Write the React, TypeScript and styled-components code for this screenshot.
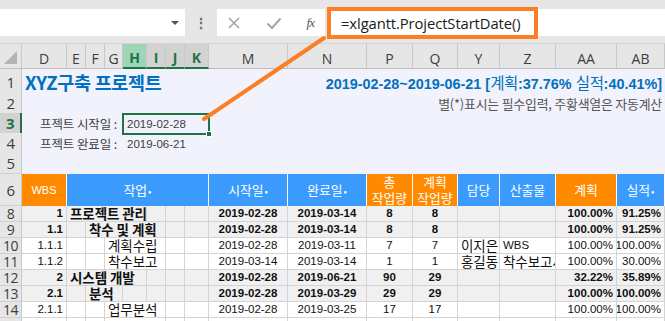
import React from 'react';
import styled, { createGlobalStyle } from 'styled-components';

const COLS =
  '22px 45px 19px 19px 18px 24px 19px 19px 24px 79px 79px 46px 45px 42px 56px 61px 48px';

const UI = '"Open Sans", "Noto Sans", "Noto Sans CJK KR", sans-serif';
const KR = '"Noto Sans CJK KR", "Noto Sans", sans-serif';
const NUM = '"Liberation Sans", "Noto Sans CJK KR", sans-serif';

const GlobalStyle = createGlobalStyle`
  html, body { margin: 0; padding: 0; background: #f2f2fc; overflow: hidden; }
  * { box-sizing: border-box; }
`;

const Frame = styled.div`
  position: relative;
  width: 665px;
  height: 321px;
  overflow: hidden;
  background: #f2f2fc;
  font-family: ${KR};
`;

/* ---------- formula bar ---------- */
const FormulaBar = styled.div`
  height: 44px;
  background: #e6e6e6;
  display: flex;
  align-items: flex-start;
  padding-top: 9px;
  border-bottom: 1px solid #d4d4d4;
`;

const NameBox = styled.div`
  width: 185px;
  height: 27px;
  background: #fff;
  display: flex;
  align-items: center;
  justify-content: flex-end;
  padding-right: 6px;
`;

const Caret = styled.div`
  width: 0;
  height: 0;
  border-left: 4px solid transparent;
  border-right: 4px solid transparent;
  border-top: 4px solid #555;
`;

const Dots = styled.div`
  width: 32px;
  height: 27px;
  display: flex;
  align-items: center;
  justify-content: center;
  color: #666;
  font: bold 14px ${UI};
`;

const FxBox = styled.div`
  width: 108px;
  height: 27px;
  background: #fff;
  display: flex;
  align-items: center;
  justify-content: space-between;
  padding: 0 11px 0 10px;
`;

const FxText = styled.span`
  font: italic 13px "Liberation Serif", serif;
  color: #555;
  letter-spacing: -1px;
`;

const FormulaField = styled.div`
  flex: 1;
  margin-left: 2px;
  height: 27px;
  background: #fff;
  display: flex;
  align-items: center;
  padding-left: 14px;
  font: 14.8px ${UI};
  color: #1a1a1a;
  letter-spacing: -0.1px;
`;

/* ---------- annotation overlay ---------- */
const Callout = styled.div`
  position: absolute;
  left: 327px;
  top: 7px;
  width: 211px;
  height: 32px;
  border: 4px solid #fb7f24;
  pointer-events: none;
`;

const Pointer = styled.svg`
  position: absolute;
  left: 0;
  top: 0;
  pointer-events: none;
`;

/* ---------- grid rows ---------- */
const Row = styled.div<{ $h: number; $bg?: string }>`
  display: grid;
  grid-template-columns: ${COLS};
  height: ${(p) => p.$h}px;
  background: ${(p) => p.$bg || 'transparent'};
  position: relative;
`;

const ColHead = styled.div<{ $sel?: 'main' | 'sub' }>`
  display: flex;
  align-items: center;
  justify-content: center;
  padding-top: 4px;
  font: ${(p) => (p.$sel ? 'bold' : 'normal')} 14px ${UI};
  color: ${(p) => (p.$sel ? '#217346' : '#3d3d3d')};
  background: ${(p) =>
    p.$sel === 'main' ? '#9fd5b7' : p.$sel === 'sub' ? '#d2d2d2' : '#e6e6e6'};
  border-right: 1px solid #c8c8c8;
  border-bottom: ${(p) => (p.$sel ? '2px solid #217346' : '1px solid #bdbdbd')};
`;

const Corner = styled.div`
  background: #e6e6e6;
  border-right: 1px solid #c8c8c8;
  border-bottom: 1px solid #bdbdbd;
  display: flex;
  align-items: flex-end;
  justify-content: flex-end;
  padding: 0 4px 4px 0;
`;

const RowHead = styled.div<{ $sel?: boolean; $small?: boolean }>`
  background: ${(p) => (p.$sel ? '#d2d2d2' : '#e6e6e6')};
  color: ${(p) => (p.$sel ? '#217346' : '#3d3d3d')};
  font: ${(p) => (p.$sel ? 'bold' : 'normal')} ${(p) => (p.$small ? '14px' : '15px')} ${UI};
  display: flex;
  align-items: center;
  justify-content: center;
  line-height: ${(p) => (p.$small ? '15px' : '20px')};
  border-right: ${(p) => (p.$sel ? '2px solid #217346' : '1px solid #c8c8c8')};
  border-bottom: 1px solid #d0d0d0;
  letter-spacing: -0.5px;
`;

const Wide = styled.div<{ $from: number; $to?: number }>`
  grid-column: ${(p) => p.$from} / ${(p) => p.$to ?? -1};
  display: flex;
  align-items: center;
  justify-content: space-between;
  padding: 0 3px;
  white-space: nowrap;
`;

const Title = styled.span`
  font: bold 18.5px ${KR};
  color: #0070c0;
  letter-spacing: -0.3px;
`;

const Summary = styled.span`
  font: bold 14.4px ${NUM};
  color: #0070c0;
`;

const SummaryKr = styled.span`
  font: 15.5px ${KR};
  letter-spacing: -0.3px;
`;

const Note = styled.span`
  margin-left: auto;
  font: 12.9px ${KR};
  color: #555;
  letter-spacing: -0.2px;
`;

const Label = styled.div`
  grid-column: 2 / 6;
  display: flex;
  align-items: center;
  padding-left: 18px;
  font: 12.5px ${KR};
  color: #404040;
  white-space: nowrap;
  letter-spacing: -0.1px;
`;

const DateValue = styled.div<{ $selected?: boolean }>`
  grid-column: 6 / 10;
  position: relative;
  display: flex;
  align-items: center;
  padding-left: 3px;
  font: 11.5px ${NUM};
  color: #404040;
  border: ${(p) => (p.$selected ? '2px solid #217346' : '2px solid transparent')};
  margin: 0 -1px -1px -1px;
`;

const FillHandle = styled.div`
  position: absolute;
  right: -4px;
  bottom: -4px;
  width: 6px;
  height: 6px;
  background: #217346;
  border: 1px solid #fff;
`;

const HeadCell = styled.div<{ $orange?: boolean; $span?: string }>`
  grid-column: ${(p) => p.$span || 'auto'};
  background: ${(p) => (p.$orange ? '#ff8a00' : '#3a9bfc')};
  color: #fff;
  border-right: 1px solid #fff;
  display: flex;
  flex-direction: column;
  align-items: center;
  justify-content: center;
  font: 12.8px ${KR};
  line-height: 16px;
  text-align: center;
  white-space: nowrap;
`;

const HeadLatin = styled.span`
  font: 11px ${NUM};
`;

const Dot = styled.span`
  font-size: 10px;
  margin-left: 1px;
`;

const Cell = styled.div<{
  $align?: 'left' | 'right' | 'center';
  $bold?: boolean;
  $kr?: boolean;
  $span?: string;
}>`
  grid-column: ${(p) => p.$span || 'auto'};
  border-right: 1px solid #d4d4d4;
  border-bottom: 1px solid #d4d4d4;
  display: flex;
  align-items: center;
  justify-content: ${(p) =>
    p.$align === 'right' ? 'flex-end' : p.$align === 'center' ? 'center' : 'flex-start'};
  padding: 0 3px;
  font: ${(p) => (p.$bold ? 'bold' : 'normal')} ${(p) => (p.$kr ? '13.5px' : '11.5px')}
    ${(p) => (p.$kr ? KR : NUM)};
  color: #111;
  white-space: nowrap;
  overflow-x: clip;
  overflow-y: visible;
  line-height: 15px;
  letter-spacing: ${(p) => (p.$kr ? '-0.1px' : '0')};
`;

type Task = {
  n: number;
  wbs: string;
  task: string;
  span: [number, number];
  start: string;
  end: string;
  total: string;
  plan: string;
  owner: string;
  output: string;
  pp: string;
  ap: string;
  sum: boolean;
};

const tasks: Task[] = [
  { n: 8, wbs: '1', task: '프로젝트 관리', span: [3, 7], start: '2019-02-28', end: '2019-03-14', total: '8', plan: '8', owner: '', output: '', pp: '100.00%', ap: '91.25%', sum: true },
  { n: 9, wbs: '1.1', task: '착수 및 계획', span: [4, 8], start: '2019-02-28', end: '2019-03-14', total: '8', plan: '8', owner: '', output: '', pp: '100.00%', ap: '91.25%', sum: true },
  { n: 10, wbs: '1.1.1', task: '계획수립', span: [5, 8], start: '2019-02-28', end: '2019-03-11', total: '7', plan: '7', owner: '이지은', output: 'WBS', pp: '100.00%', ap: '100.00%', sum: false },
  { n: 11, wbs: '1.1.2', task: '착수보고', span: [5, 8], start: '2019-03-14', end: '2019-03-14', total: '1', plan: '1', owner: '홍길동', output: '착수보고서', pp: '100.00%', ap: '30.00%', sum: false },
  { n: 12, wbs: '2', task: '시스템 개발', span: [3, 7], start: '2019-02-28', end: '2019-06-21', total: '90', plan: '29', owner: '', output: '', pp: '32.22%', ap: '35.89%', sum: true },
  { n: 13, wbs: '2.1', task: '분석', span: [4, 6], start: '2019-02-28', end: '2019-03-29', total: '29', plan: '29', owner: '', output: '', pp: '100.00%', ap: '100.00%', sum: true },
  { n: 14, wbs: '2.1.1', task: '업무분석', span: [5, 8], start: '2019-02-28', end: '2019-03-25', total: '17', plan: '17', owner: '', output: '', pp: '100.00%', ap: '100.00%', sum: false },
  { n: 15, wbs: '', task: '', span: [5, 8], start: '', end: '', total: '', plan: '', owner: '', output: '', pp: '', ap: '', sum: false },
];

const letters: { l: string; sel?: 'main' | 'sub' }[] = [
  { l: 'D' }, { l: 'E' }, { l: 'F' }, { l: 'G' }, { l: 'H', sel: 'main' }, { l: 'I', sel: 'sub' },
  { l: 'J', sel: 'sub' }, { l: 'K', sel: 'sub' }, { l: 'M' }, { l: 'N' }, { l: 'P' }, { l: 'Q' },
  { l: 'Y' }, { l: 'Z' }, { l: 'AA' }, { l: 'AB' },
];

function TaskRow({ t }: { t: Task }) {
  const cells: React.ReactNode[] = [];
  for (let c = 3; c <= 9; c++) {
    if (c === t.span[0]) {
      cells.push(
        <Cell key={c} $span={`${t.span[0]} / ${t.span[1]}`} $kr $bold={t.sum}>
          {t.task}
        </Cell>
      );
      c = t.span[1] - 1;
    } else {
      cells.push(<Cell key={c} />);
    }
  }
  return (
    <Row $h={16} $bg={t.sum ? '#f0f0f0' : '#ffffff'}>
      <RowHead $small>{t.n}</RowHead>
      <Cell $align="right" $bold={t.sum}>{t.wbs}</Cell>
      {cells}
      <Cell $align="center" $bold={t.sum}>{t.start}</Cell>
      <Cell $align="center" $bold={t.sum}>{t.end}</Cell>
      <Cell $align="center" $bold={t.sum}>{t.total}</Cell>
      <Cell $align="center" $bold={t.sum}>{t.plan}</Cell>
      <Cell $kr>{t.owner}</Cell>
      <Cell $kr={t.output !== 'WBS'}>{t.output}</Cell>
      <Cell $align="right" $bold={t.sum}>{t.pp}</Cell>
      <Cell $align="right" $bold={t.sum}>{t.ap}</Cell>
    </Row>
  );
}

export default function App() {
  return (
    <Frame>
      <GlobalStyle />
      <FormulaBar>
        <NameBox>
          <Caret />
        </NameBox>
        <Dots>⋮</Dots>
        <FxBox>
          <svg width="14" height="14" viewBox="0 0 14 14">
            <path d="M2 2 L12 12 M12 2 L2 12" stroke="#a6a6a6" strokeWidth="1.6" fill="none" />
          </svg>
          <svg width="16" height="14" viewBox="0 0 16 14">
            <path d="M1.5 7.5 L6 12 L14.5 2.5" stroke="#a6a6a6" strokeWidth="2" fill="none" />
          </svg>
          <FxText>fx</FxText>
        </FxBox>
        <FormulaField>=xlgantt.ProjectStartDate()</FormulaField>
      </FormulaBar>

      <Row $h={25}>
        <Corner>
          <svg width="13" height="13" viewBox="0 0 13 13">
            <path d="M13 0 L13 13 L0 13 Z" fill="#b4b4b4" />
          </svg>
        </Corner>
        {letters.map((c) => (
          <ColHead key={c.l} $sel={c.sel}>
            {c.l}
          </ColHead>
        ))}
      </Row>

      <Row $h={24}>
        <RowHead>1</RowHead>
        <Wide $from={2}>
          <Title>XYZ구축 프로젝트</Title>
          <Summary>
            2019-02-28~2019-06-21 [<SummaryKr>계획</SummaryKr>:37.76% <SummaryKr>실적</SummaryKr>:40.41%]
          </Summary>
        </Wide>
      </Row>
      <Row $h={20}>
        <RowHead>2</RowHead>
        <Wide $from={2}>
          <Note>별(*)표시는 필수입력, 주황색열은 자동계산</Note>
        </Wide>
      </Row>
      <Row $h={20}>
        <RowHead $sel>3</RowHead>
        <Label>프젝트 시작일 :</Label>
        <DateValue $selected>
          2019-02-28
          <FillHandle />
        </DateValue>
      </Row>
      <Row $h={20}>
        <RowHead>4</RowHead>
        <Label>프젝트 완료일 :</Label>
        <DateValue>2019-06-21</DateValue>
      </Row>
      <Row $h={21}>
        <RowHead>5</RowHead>
      </Row>
      <Row $h={32}>
        <RowHead>6</RowHead>
        <HeadCell $orange>
          <HeadLatin>WBS</HeadLatin>
        </HeadCell>
        <HeadCell $span="3 / 10">
          <span>
            작업<Dot>•</Dot>
          </span>
        </HeadCell>
        <HeadCell>
          <span>
            시작일<Dot>•</Dot>
          </span>
        </HeadCell>
        <HeadCell>
          <span>
            완료일<Dot>•</Dot>
          </span>
        </HeadCell>
        <HeadCell $orange>
          <span>총</span>
          <span>작업량</span>
        </HeadCell>
        <HeadCell $orange>
          <span>계획</span>
          <span>작업량</span>
        </HeadCell>
        <HeadCell>담당</HeadCell>
        <HeadCell>산출물</HeadCell>
        <HeadCell $orange>계획</HeadCell>
        <HeadCell>
          <span>
            실적<Dot>•</Dot>
          </span>
        </HeadCell>
      </Row>
      {tasks.map((t) => (
        <TaskRow key={t.n} t={t} />
      ))}

      <Callout />
      <Pointer width="665" height="321" viewBox="0 0 665 321">
        <line x1="324" y1="38" x2="204" y2="119" stroke="#fb7f24" strokeWidth="4" strokeLinecap="round" />
      </Pointer>
    </Frame>
  );
}
